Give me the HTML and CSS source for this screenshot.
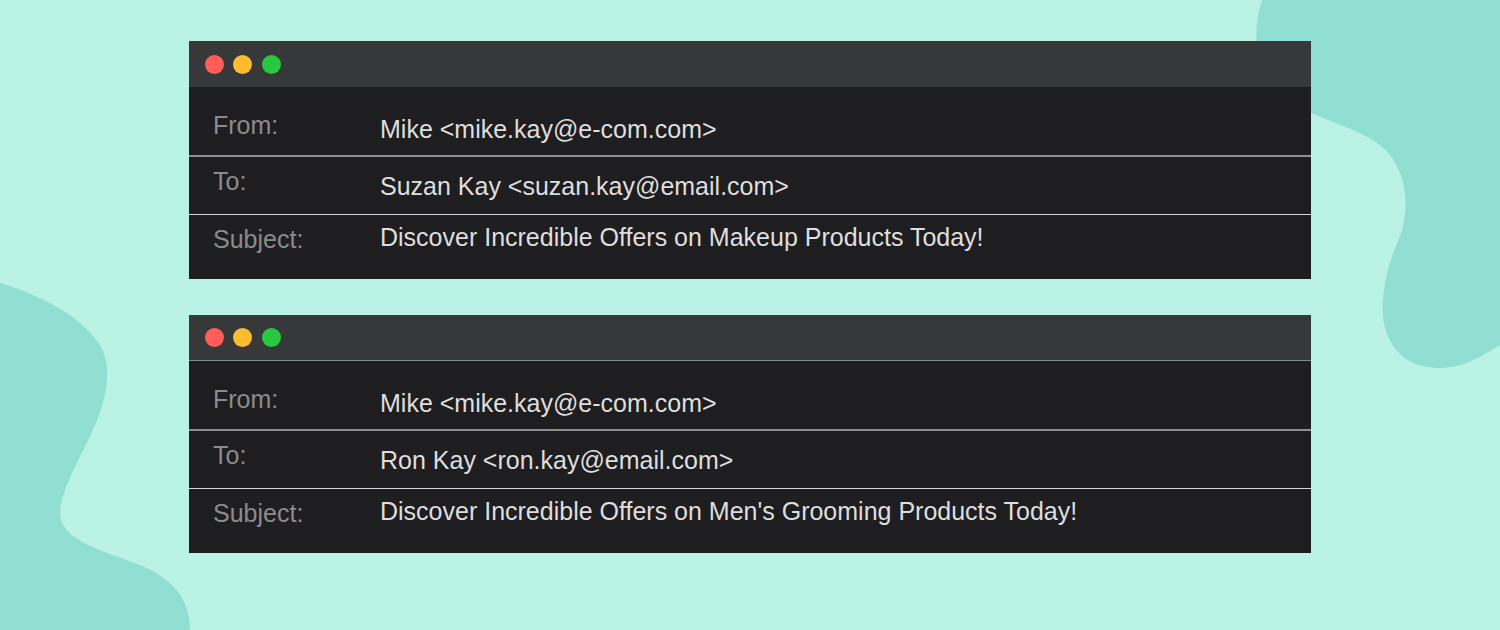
FILE: index.html
```html
<!DOCTYPE html>
<html lang="en">
<head>
<meta charset="utf-8">
<title>Email headers</title>
<link rel="stylesheet" href="styles.css">
</head>
<body>
<div class="page">
  <svg class="blobs" width="1500" height="630" viewBox="0 0 1500 630" aria-hidden="true">
    <path d="M1262,0 L1500,0 L1500,345 C1480,358 1460,368 1440,368 C1400,368 1380,340 1383,300 C1385,270 1395,250 1402,230 C1410,200 1405,165 1380,145 C1355,125 1300,115 1270,90 C1255,70 1252,30 1262,0 Z" />
    <path d="M0,283 C40,295 80,315 100,345 C112,365 108,395 95,425 C80,460 60,490 60,515 C62,540 100,550 140,565 C175,580 190,600 190,630 L0,630 Z" />
  </svg>

  <div class="stack">
    <section class="window">
      <div class="titlebar">
        <span class="dot red"></span><span class="dot yellow"></span><span class="dot green"></span>
      </div>
      <div class="row row-from">
        <div class="label">From:</div>
        <div class="value">Mike &lt;mike.kay@e-com.com&gt;</div>
      </div>
      <div class="row row-to">
        <div class="label">To:</div>
        <div class="value">Suzan Kay &lt;suzan.kay@email.com&gt;</div>
      </div>
      <div class="row row-subject">
        <div class="label">Subject:</div>
        <div class="value">Discover Incredible Offers on Makeup Products Today!</div>
      </div>
    </section>

    <section class="window">
      <div class="titlebar titlebar-lined">
        <span class="dot red"></span><span class="dot yellow"></span><span class="dot green"></span>
      </div>
      <div class="row row-from">
        <div class="label">From:</div>
        <div class="value">Mike &lt;mike.kay@e-com.com&gt;</div>
      </div>
      <div class="row row-to">
        <div class="label">To:</div>
        <div class="value">Ron Kay &lt;ron.kay@email.com&gt;</div>
      </div>
      <div class="row row-subject">
        <div class="label">Subject:</div>
        <div class="value">Discover Incredible Offers on Men's Grooming Products Today!</div>
      </div>
    </section>
  </div>
</div>
</body>
</html>
```

FILE: styles.css
```css
* { box-sizing: border-box; }

html, body {
  margin: 0;
  padding: 0;
}

body {
  font-family: "Liberation Sans", Arial, sans-serif;
  background: #baf2e5;
}

.page {
  position: relative;
  width: 1500px;
  height: 630px;
  overflow: hidden;
  background: #baf2e5;
}

.blobs {
  position: absolute;
  left: 0;
  top: 0;
  fill: #91dfd2;
}

.stack {
  position: relative;
  display: flex;
  flex-direction: column;
  gap: 36px;
  padding: 41px 0 0 189px;
}

.window {
  width: 1122px;
  height: 238px;
  background: #1e1d20;
  display: flex;
  flex-direction: column;
}

.titlebar {
  height: 46px;
  background: #37383a;
  display: flex;
  align-items: center;
  gap: 9.5px;
  padding-left: 15.5px;
  flex: none;
}

.titlebar-lined {
  border-bottom: 1px solid #7c8d88;
}

.dot {
  width: 19px;
  height: 19px;
  border-radius: 50%;
  display: block;
}
.red { background: #ff5f57; }
.yellow { background: #febc2e; }
.green { background: #28c840; }

.row {
  display: flex;
  align-items: flex-start;
  padding-left: 24px;
  flex: none;
}

.label {
  width: 167px;
  flex: none;
  font-size: 25px;
  line-height: 25px;
  color: #8b8b8b;
}

.value {
  font-size: 25px;
  line-height: 25px;
  color: #dedede;
  white-space: nowrap;
}

.row-from {
  height: 70px;
  padding-top: 26px;
  border-bottom: 2px solid #8e8e8e;
}
.row-from .value { margin-top: 4px; }

.row-to {
  height: 58px;
  padding-top: 12px;
  border-bottom: 1px solid #d6d6d6;
}
.row-to .value { margin-top: 5px; }

.row-subject {
  flex: 1;
  padding-top: 10px;
}
.row-subject .label { margin-top: 2px; }
```
